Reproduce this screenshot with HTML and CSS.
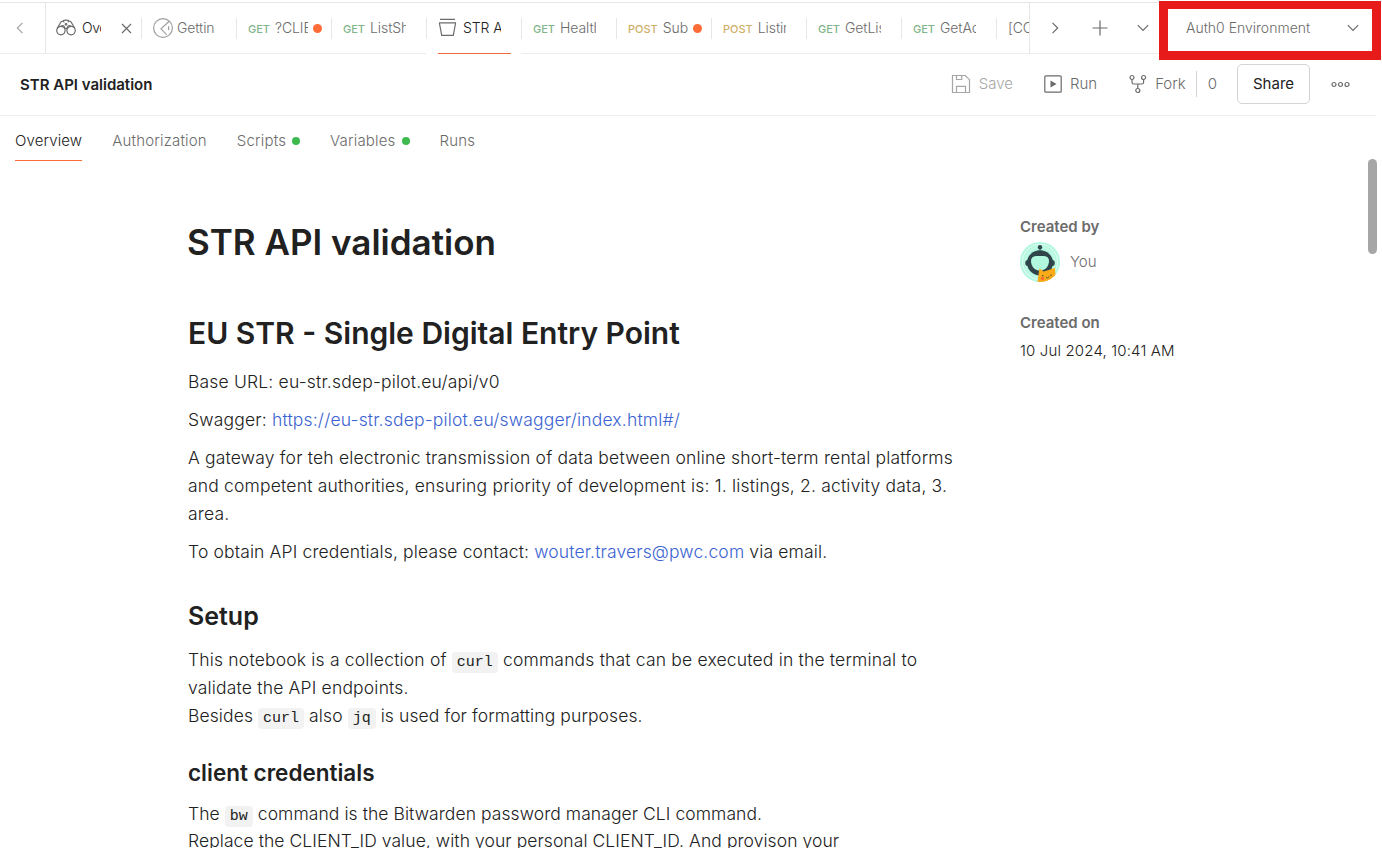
FILE: index.html
```
<!DOCTYPE html>
<html lang="en">
<head>
<meta charset="utf-8">
<title>STR API validation</title>
<link rel="stylesheet" href="styles.css">
</head>
<body>
<div class="app">
  <div class="tabbar">
    <div class="scroll-left"><svg width="8" height="12" viewBox="0 0 8 12"><path d="M6.500 .8L1.300 6l5.200 5.200"/></svg></div>
    <div class="tabs">
      <div class="tab dark first">
        <svg class="ic" width="20" height="18" viewBox="0 0 20 18"><circle cx="4.900" cy="11.600" r="4.200"/><circle cx="15.100" cy="11.600" r="4.200"/><circle cx="10" cy="5.300" r=".8"/><path d="M1.200 9.200L4.800 3.200C5.600 2 7.600 1.800 8.200 3.400M18.800 9.200l-3.600-6C14.400 2 12.400 1.800 11.800 3.400M6.600 2.200C8 .8 12 .8 13.400 2.200M8.800 9.800q1.200-1 2.400 0M5 7.400C7 5.500 8.400 7 9 9.500M15 7.400c-2-1.900-3.400-.4-4 2.100"/></svg>
        <span class="title">Ove</span>
        <svg class="close" width="11" height="11" viewBox="0 0 11 11"><path d="M1 1l9 9M10 1l-9 9"/></svg>
      </div>
      <div class="tab">
        <svg class="ic pale" width="20" height="20" viewBox="0 0 20 20"><circle cx="10" cy="10" r="9.400"/><path d="M16.200 3.200L8 10.800l5.800 6M8 10.800l5.600 5.800M15.600 8.200v4"/></svg>
        <span class="title">Gettin</span>
      </div>
      <div class="tab has-dot"><span class="get">GET</span><span class="title">?CLIE</span><i class="dot"></i></div>
      <div class="tab"><span class="get">GET</span><span class="title">ListSh</span></div>
      <div class="tab dark active">
        <svg class="ic" width="19" height="20" viewBox="0 0 19 20"><path d="M2 1.400h15M1 4.900h17M1.400 5l2.300 12.400h11.600L17.600 5"/></svg>
        <span class="title">STR A</span>
      </div>
      <div class="tab"><span class="get">GET</span><span class="title">Health</span></div>
      <div class="tab has-dot"><span class="post">POST</span><span class="title">Sub</span><i class="dot"></i></div>
      <div class="tab"><span class="post">POST</span><span class="title">Listin</span></div>
      <div class="tab"><span class="get">GET</span><span class="title">GetLis</span></div>
      <div class="tab"><span class="get">GET</span><span class="title">GetAc</span></div>
      <div class="tab last"><span class="title">[CO</span></div>
    </div>
    <div class="tabctl">
      <svg width="8" height="12" viewBox="0 0 8 12"><path d="M1.500 .8L6.700 6l-5.200 5.200"/></svg>
      <svg width="16" height="16" viewBox="0 0 16 16"><path d="M8 .5v15M.5 8h15"/></svg>
      <svg width="12" height="8" viewBox="0 0 12 8"><path d="M.8 1.200L6 6.400l5.200-5.200"/></svg>
    </div>
    <div class="env"><span>Auth0 Environment</span><svg width="12" height="8" viewBox="0 0 12 8"><path d="M.8 1.200L6 6.400l5.200-5.200"/></svg></div>
  </div>

  <div class="header">
    <div class="name">STR API validation</div>
    <div class="action save"><svg width="20" height="20" viewBox="0 0 20 20"><path d="M1.500 1.500h12.800l4.200 4.200v12.800h-17zM5.500 1.500v4h5.200v-4M5.500 18.500v-6.200h9v6.200"/></svg><span>Save</span></div>
    <div class="action run"><svg width="18" height="18" viewBox="0 0 18 18"><rect x=".8" y=".8" width="16.400" height="16.400" rx="1"/><path class="solid" d="M6.500 5.500l6 3.500-6 3.500z"/></svg><span>Run</span></div>
    <div class="action fork"><svg width="18" height="20" viewBox="0 0 18 20"><circle cx="3" cy="3.500" r="2"/><circle cx="14.600" cy="3.500" r="2"/><circle cx="8.800" cy="16.500" r="2"/><path d="M3 5.500v2.700q0 1.800 1.800 1.800h8q1.800 0 1.800-1.800V5.500M8.800 10v4.500"/></svg><span>Fork</span></div>
    <div class="count">0</div>
    <button class="share">Share</button>
    <svg class="more" width="19" height="7" viewBox="0 0 19 7"><circle cx="3" cy="3.500" r="2"/><circle cx="9.500" cy="3.500" r="2"/><circle cx="16" cy="3.500" r="2"/></svg>
  </div>

  <nav class="subnav">
    <a class="on">Overview</a><a>Authorization</a><a>Scripts<i></i></a><a>Variables<i></i></a><a>Runs</a>
  </nav>

  <div class="body">
    <main class="doc">
      <h1>STR API validation</h1>
      <h2>EU STR - Single Digital Entry Point</h2>
      <p>Base URL: eu-str.sdep-pilot.eu/api/v0</p>
      <p>Swagger: <a>https://eu-str.sdep-pilot.eu/swagger/index.html#/</a></p>
      <p>A gateway for teh electronic transmission of data between online short-term rental platforms<br>and competent authorities, ensuring priority of development is: 1. listings, 2. activity data, 3.<br>area.</p>
      <p class="contact">To obtain API credentials, please contact: <a>wouter.travers@pwc.com</a> via email.</p>
      <h3>Setup</h3>
      <p>This notebook is a collection of <code>curl</code> commands that can be executed in the terminal to<br>validate the API endpoints.<br><span class="tight">Besides <code>curl</code> also <code>jq</code> is used for formatting purposes.</span></p>
      <h4>client credentials</h4>
      <p class="client">The <code>bw</code> command is the Bitwarden password manager CLI command.<br>Replace the CLIENT_ID value, with your personal CLIENT_ID. And provison your</p>
    </main>
    <aside class="meta">
      <div class="label">Created by</div>
      <div class="user">
        <svg width="40" height="40" viewBox="0 0 40 40">
          <defs><clipPath id="round"><circle cx="20" cy="20" r="20"/></clipPath></defs>
          <g clip-path="url(#round)">
            <rect width="40" height="40" fill="#b1f8df"/>
            <circle cx="20" cy="20" r="17.500" fill="none" stroke="#dffcf2"/>
            <circle cx="20" cy="20" r="15" fill="none" stroke="#dffcf2" stroke-width=".7"/>
            <circle cx="20" cy="5.300" r="2.200" fill="#2f4549"/><path d="M19.500 6h1v4h-1z" fill="#2f4549"/>
            <rect x="5.300" y="18" width="29.400" height="6" rx="2.500" fill="#2f4549"/>
            <ellipse cx="20" cy="20.800" rx="13" ry="12.600" fill="#2f4549"/>
            <path d="M11 19q0-4.500 5-5h8q5 .5 5 5c0 5-3.500 9.600-9 9.600S11 24 11 19z" fill="#b1f8df"/>
            <path d="M17.500 40l1-7.500 1-6.200 4 3.200 6-1.700 5.500-2 .5 7-2 7.200z" fill="#fbab18"/>
            <circle cx="22.500" cy="36.500" r="1.800" fill="#ff6c37"/><circle cx="22.800" cy="33.700" r=".7" fill="#2f4549"/><circle cx="31" cy="33.200" r=".7" fill="#2f4549"/><path d="M26 35l1.500 1 1.800-1.200" fill="none" stroke="#2f4549" stroke-width=".8"/>
          </g>
        </svg>
        <span>You</span>
      </div>
      <div class="label">Created on</div>
      <div class="date">10 Jul 2024, 10:41 AM</div>
    </aside>
    <div class="thumb"></div>
  </div>
</div>
</body>
</html>
```
FILE: styles.css
```
* { box-sizing: border-box; }
body { margin: 0; background: #fff; color: #212121; font-family: Inter, "Liberation Sans", sans-serif; font-size: 15px; font-weight: 350; }
.app { width: 1382px; height: 848px; overflow: hidden; display: flex; flex-direction: column; }
svg { flex: none; fill: none; stroke: #6b6b6b; stroke-width: 1.2; }

.tabbar { display: flex; flex: none; height: 61px; }
.scroll-left { width: 46px; padding: 0 5px 0 0; border-right: 1px solid #e6e6e6; border-bottom: 1px solid #ededed; display: flex; align-items: center; justify-content: center; }
.scroll-left svg { stroke: #a6a6a6; }
.scroll-left, .tabs, .tabctl { height: 52px; margin-top: 2px; border-top: 1px solid #e6e6e6; }
.tabs { width: 984px; display: flex; overflow: hidden; border-right: 1px solid #e6e6e6; }
.tab { flex: none; width: 95px; height: 51px; padding: 0 20px 0 12px; display: flex; align-items: center; border-bottom: 1px solid #ededed; color: #6b6b6b; font-size: 14px; white-space: nowrap; background: linear-gradient(#e6e6e6, #e6e6e6) 0 15px / 1px 21px no-repeat; }
.tab.first { padding-left: 10px; padding-right: 9px; background: none; }
.tab.dark { color: #212121; }
.tab.has-dot { padding-right: 9px; }
.tab.active { border-bottom: 0; padding-bottom: 1px; background: linear-gradient(#e6e6e6, #e6e6e6) 0 15px / 1px 21px no-repeat, linear-gradient(#f26b3a, #f26b3a) 12px 50px / 73px 1px no-repeat; }
.tab.last { padding-right: 0; }
.title { flex: 1; min-width: 0; overflow: hidden; line-height: 20px; letter-spacing: -.1px; }
.ic { margin-right: 6px; }
.pale { stroke: #a0a0a0; margin-right: 4px; }
.first .title { flex: none; width: 19px; letter-spacing: -.4px; }
.close { margin-left: 20px; }
.get, .post { flex: none; font-size: 11px; font-weight: 500; margin-right: 5px; padding-top: 1px; letter-spacing: 0; color: #7fb58a; }
.post { color: #cfb06a; }
.dot { width: 9px; height: 9px; margin-left: 5px; border-radius: 50%; background: #ff6c37; }
.tabctl { width: 129px; display: flex; align-items: center; padding-left: 21px; border-bottom: 1px solid #ededed; }
.tabctl svg:nth-child(2) { margin-left: 33px; }
.tabctl svg:nth-child(3) { margin-left: 29px; }
.env { width: 222px; height: 59px; margin-top: 1px; border: solid #e81b1b; border-width: 8px 9px 9px; padding: 0 13px 4px 18px; display: flex; align-items: center; justify-content: space-between; color: #6b6b6b; font-size: 14px; }
.env span { padding-bottom: 2px; }

.header { flex: none; width: 1376px; height: 55px; padding: 0 26px 8px 20px; display: flex; align-items: center; border-bottom: 1px solid #ededed; color: #6b6b6b; }
.name { flex: 1; color: #212121; font-weight: 600; }
.action { display: flex; align-items: center; gap: 8px; }
.action span { margin-top: -1px; }
.save { color: #a6a6a6; margin-right: 31px; }
.save svg { stroke: #a6a6a6; }
.run { margin-right: 32px; }
.solid { fill: #6b6b6b; stroke: none; }
.count { margin-left: 10px; padding-left: 11px; border-left: 1px solid #d4d4d4; line-height: 26px; }
.share { width: 73px; height: 40px; margin: 0 21px 0 20px; padding: 0 0 1px; border: 1px solid #d4d4d4; border-radius: 5px; background: #fff; color: #212121; font: 400 15px Inter, sans-serif; }

.subnav { flex: none; height: 45px; padding-left: 15px; display: flex; gap: 30px; color: #6b6b6b; line-height: 20px; letter-spacing: .18px; }
.subnav a { height: 45px; padding-top: 5px; display: flex; align-items: center; }
.subnav .on { padding-top: 6px; color: #212121; border-bottom: 1px solid #ff6c37; letter-spacing: .12px; }
.subnav i { width: 8px; height: 8px; margin: -1px 0 0 6px; border-radius: 50%; background: #3dba4e; }

.body { position: relative; flex: 1; min-height: 0; display: flex; }
.doc { width: 1020px; padding: 56px 0 0 188px; font-size: 17.500px; line-height: 28px; white-space: nowrap; }
h1, h2, h3, h4, p { margin: 0; }
h1 { margin-left: -1px; font-size: 35px; font-weight: 600; line-height: 50px; }
h2 { margin-top: 46px; font-size: 30px; font-weight: 600; line-height: 40px; }
p { margin-top: 10px; letter-spacing: .18px; }
.contact { letter-spacing: .14px; }
.tight { letter-spacing: .1px; }
h2 + p { margin-top: 15px; }
h3 { margin-top: 35px; font-size: 25px; font-weight: 600; line-height: 30px; }
h3 + p { margin-top: 15px; }
h4 { margin-top: 28px; font-size: 22.500px; font-weight: 600; line-height: 30px; }
h4 + p { margin-top: 12px; }
.client { line-height: 27px; letter-spacing: .07px; }
.doc a { color: #3b63d1; }
code { padding: 2px 5px; border-radius: 4px; background: #f2f2f2; font: 15px/17px "Liberation Mono", monospace; letter-spacing: 0; }
.meta { padding-top: 56px; color: #6b6b6b; line-height: 20px; }
.label { font-weight: 600; }
.user { display: flex; align-items: center; gap: 10px; margin: 5px 0 31px; }
.user svg { stroke: none; }
.date { margin-top: 8px; color: #212121; letter-spacing: .15px; }
.thumb { position: absolute; left: 1368px; top: -2px; width: 9px; height: 95px; border-radius: 5px; background: #a6a6a6; }
```
